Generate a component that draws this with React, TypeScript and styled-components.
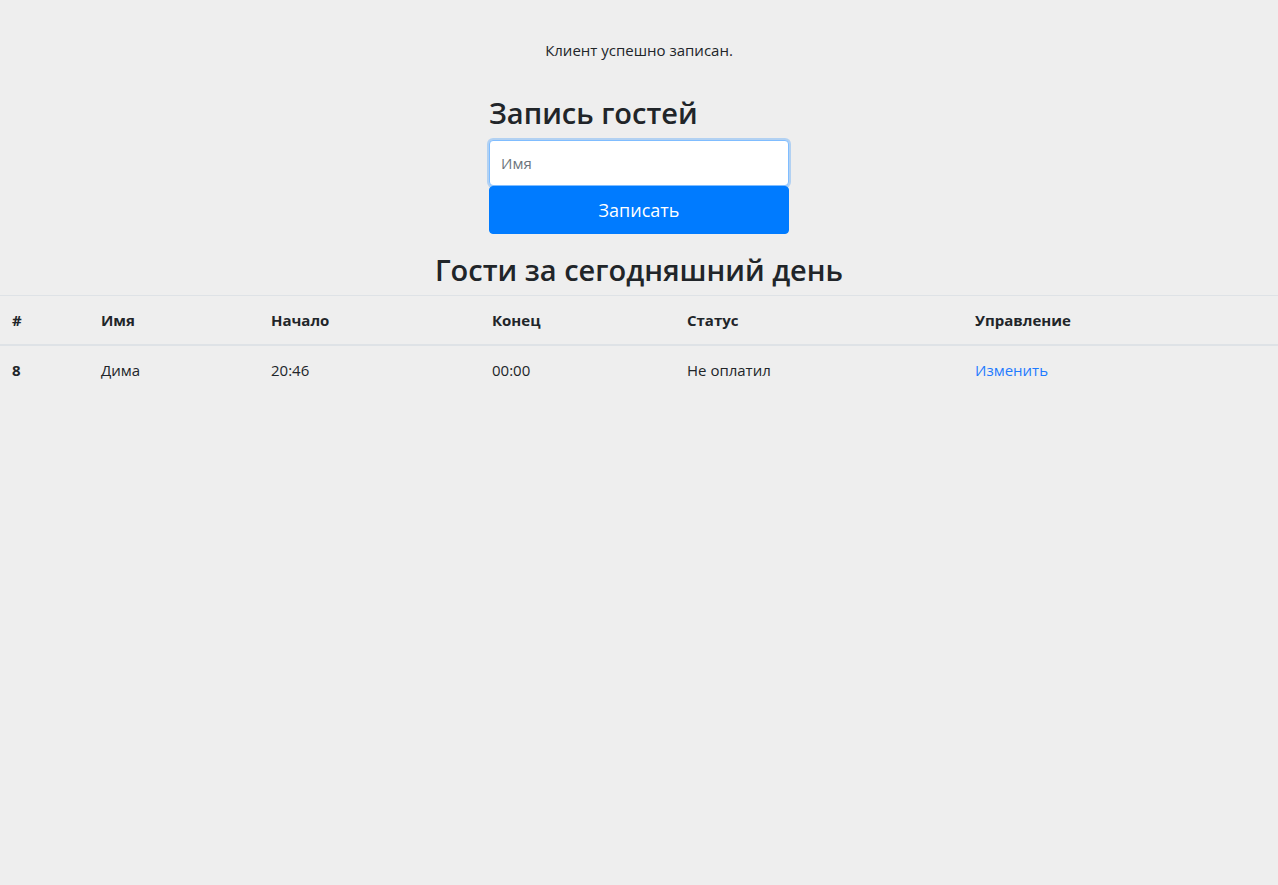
import React from 'react';
import styled, { createGlobalStyle } from 'styled-components';

const GlobalStyle = createGlobalStyle`
  html, body {
    margin: 0;
    padding: 0;
    background: #eeeeee;
  }
  body {
    font-family: 'Open Sans', 'Noto Sans', sans-serif;
    color: #212529;
    font-size: 16px;
    line-height: 1.5;
  }
`;

const Page = styled.div`
  min-height: 885px;
  display: flex;
  flex-direction: column;
  align-items: center;
`;

const Message = styled.p`
  margin: 38px 0 0;
  font-size: 15px;
  line-height: 24px;
`;

const Form = styled.form`
  width: 300px;
  margin-top: 33px;
  display: flex;
  flex-direction: column;
`;

const Title = styled.h2<{ $center?: boolean }>`
  margin: 0;
  font-size: 29px;
  font-weight: 600;
  line-height: 36px;
  text-align: ${({ $center }) => ($center ? 'center' : 'left')};
`;

const Input = styled.input`
  margin-top: 9px;
  height: 46px;
  box-sizing: border-box;
  padding: 0 11px;
  font: inherit;
  font-size: 15px;
  color: #495057;
  background: #fff;
  border: 1px solid #80bdff;
  border-radius: 4px;
  box-shadow: 0 0 0 2px rgba(0, 123, 255, 0.25);
  outline: none;

  &::placeholder {
    color: #6c757d;
  }
`;

const Button = styled.button`
  height: 48px;
  font: inherit;
  font-size: 18px;
  color: #fff;
  background: #007bff;
  border: 1px solid #007bff;
  border-radius: 4px;
  cursor: pointer;
`;

const Section = styled.section`
  width: 100%;
  margin-top: 18px;
  display: flex;
  flex-direction: column;
`;

const Table = styled.table`
  width: 100%;
  margin-top: 7px;
  border-collapse: collapse;
  table-layout: fixed;
  font-size: 15px;
`;

const Th = styled.th<{ $w?: number }>`
  box-sizing: border-box;
  width: ${({ $w }) => ($w ? `${$w}px` : 'auto')};
  text-align: left;
  font-weight: 700;
  padding: 13px 12px 12px;
  border-top: 1px solid #dee2e6;
  border-bottom: 2px solid #dee2e6;
  vertical-align: bottom;
`;

const Td = styled.td<{ $bold?: boolean }>`
  padding: 13px 12px 11px;
  font-weight: ${({ $bold }) => ($bold ? 700 : 400)};
`;

const Link = styled.a`
  color: #1f7bff;
  text-decoration: none;
`;

const columns = [
  { label: '#', w: 89 },
  { label: 'Имя', w: 170 },
  { label: 'Начало', w: 221 },
  { label: 'Конец', w: 195 },
  { label: 'Статус', w: 288 },
  { label: 'Управление' },
];

const guests = [
  { id: 8, name: 'Дима', start: '20:46', end: '00:00', status: 'Не оплатил' },
];

export default function App() {
  return (
    <Page>
      <GlobalStyle />
      <Message>Клиент успешно записан.</Message>
      <Form onSubmit={(e) => e.preventDefault()}>
        <Title>Запись гостей</Title>
        <Input placeholder="Имя" />
        <Button type="submit">Записать</Button>
      </Form>
      <Section>
        <Title $center>Гости за сегодняшний день</Title>
        <Table>
          <thead>
            <tr>
              {columns.map((c) => (
                <Th key={c.label} $w={c.w}>
                  {c.label}
                </Th>
              ))}
            </tr>
          </thead>
          <tbody>
            {guests.map((g) => (
              <tr key={g.id}>
                <Td $bold>{g.id}</Td>
                <Td>{g.name}</Td>
                <Td>{g.start}</Td>
                <Td>{g.end}</Td>
                <Td>{g.status}</Td>
                <Td>
                  <Link href="#">Изменить</Link>
                </Td>
              </tr>
            ))}
          </tbody>
        </Table>
      </Section>
    </Page>
  );
}
